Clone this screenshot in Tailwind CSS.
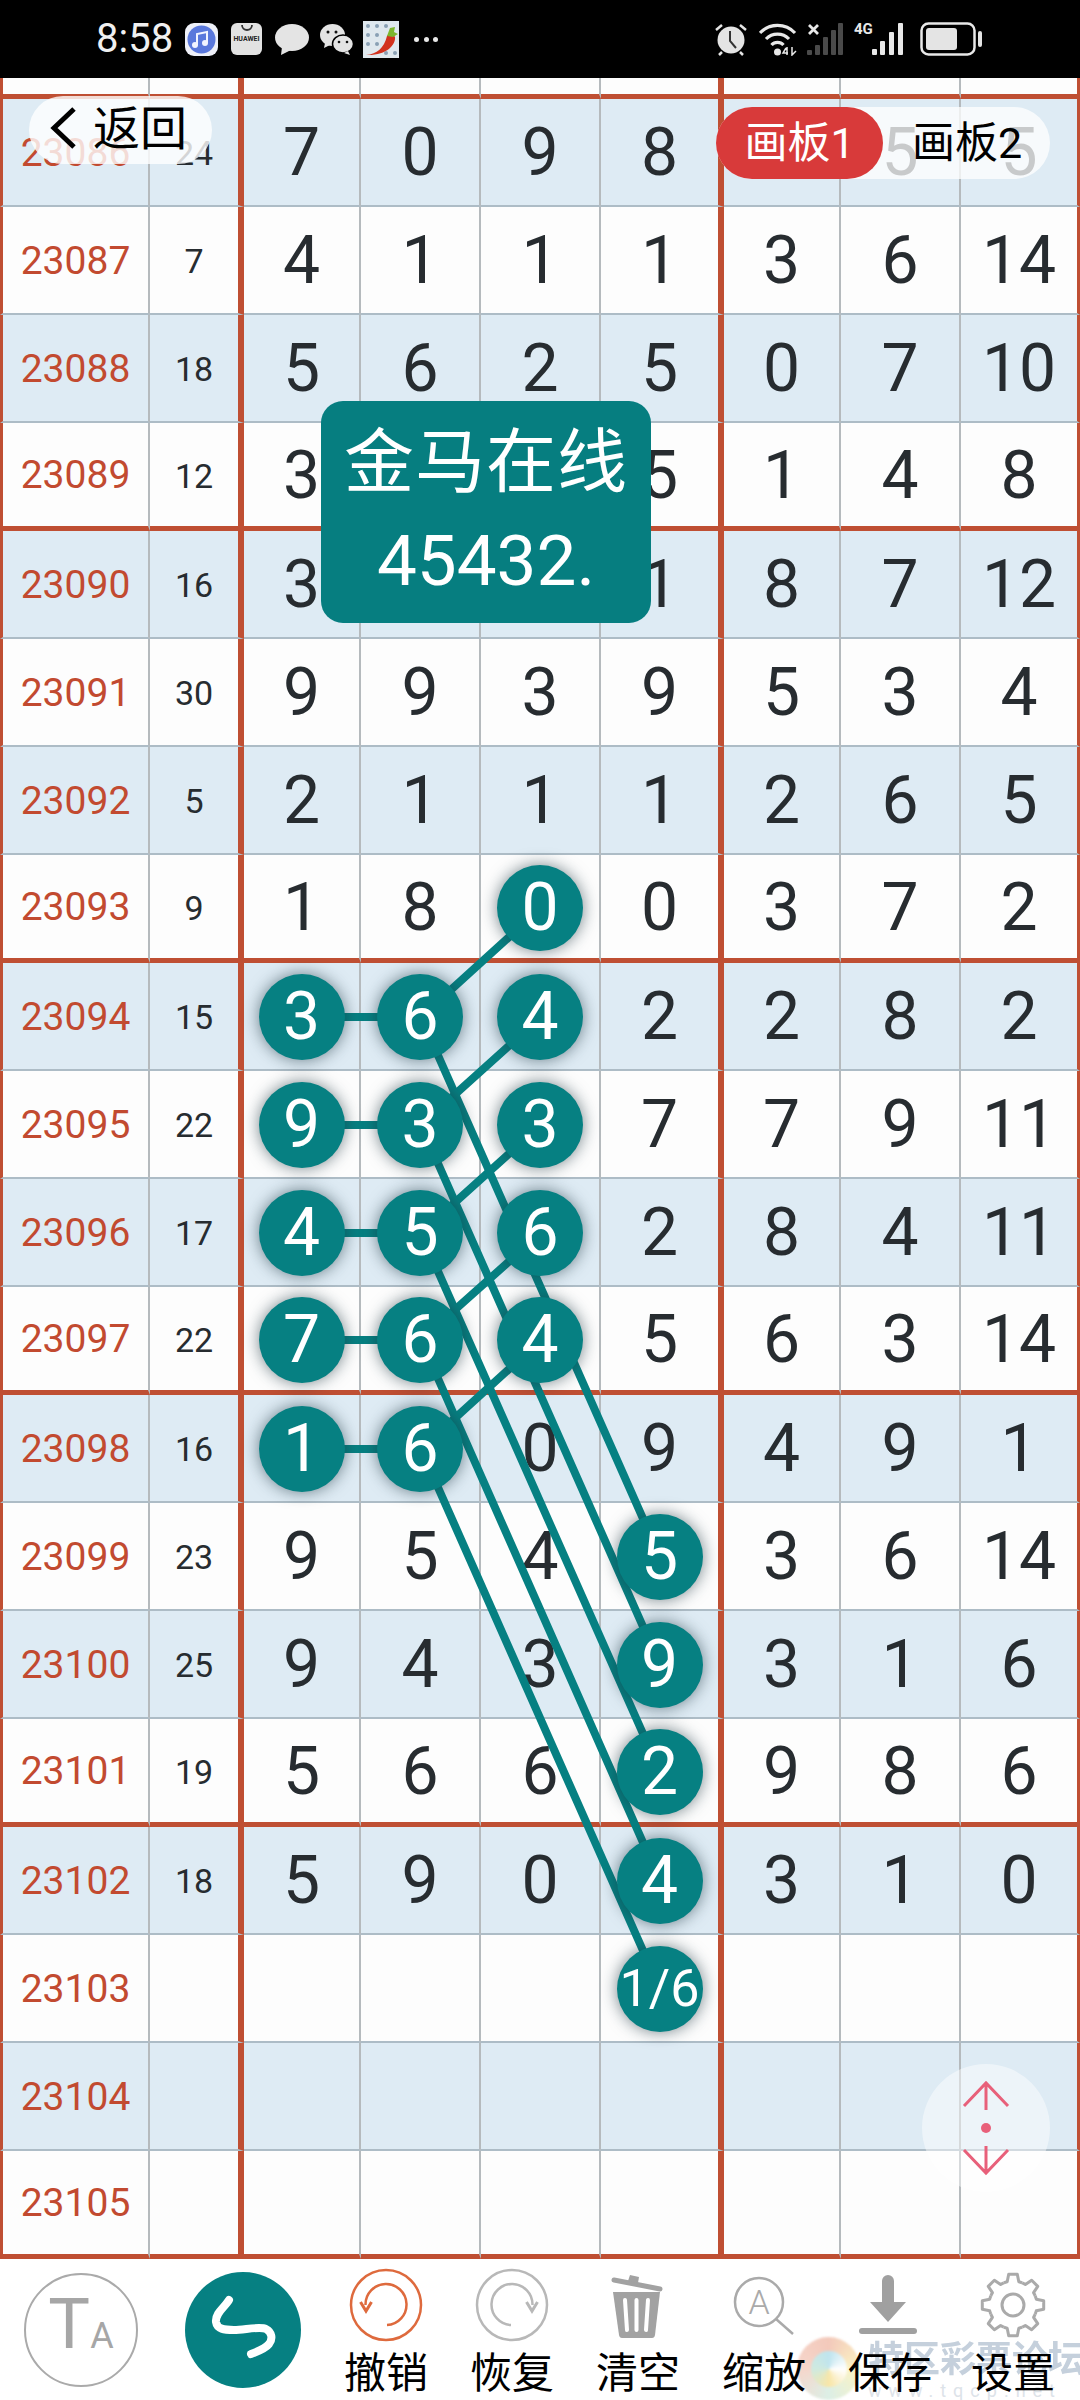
<!DOCTYPE html>
<html lang="zh">
<head>
<meta charset="utf-8">
<script src="https://cdn.jsdelivr.net/npm/@tailwindcss/browser@4"></script>
</head>
<body>
<div class="relative w-[1080px] h-[2400px] overflow-hidden bg-white flex flex-col font-['Roboto','Noto_Sans_CJK_SC',sans-serif]">

<!-- status bar -->
<div class="h-[78px] shrink-0 bg-black flex items-center justify-between pl-[96px] pr-[98px]">
  <div class="flex items-center">
    <span class="text-[40px] leading-none text-[#f0f0f0] w-[77px]">8:58</span>
    <div class="ml-[12px] w-[33px] h-[33px] rounded-[9px] bg-[#eef0f8] flex items-center justify-center">
      <svg width="29" height="29" viewBox="0 0 29 29"><circle cx="14.5" cy="14.5" r="14" fill="#5a78dc"/><path d="M10 20V9l10-2v11" fill="none" stroke="#f2f4ff" stroke-width="2"/><circle cx="8" cy="20" r="3" fill="#f2f4ff"/><circle cx="18" cy="18" r="3" fill="#f2f4ff"/></svg>
    </div>
    <div class="ml-[13px] w-[31px] h-[32px] rounded-[6px] bg-[#e2e2e2] flex flex-col items-center justify-start overflow-hidden">
      <svg width="16" height="11" viewBox="0 0 16 11"><path d="M3 2a5 5 0 0 0 10 0" fill="none" stroke="#333" stroke-width="1.8"/></svg>
      <span class="text-[7px] leading-[9px] mt-[1px] font-bold text-[#222]">HUAWEI</span>
    </div>
    <svg class="ml-[13px]" width="34" height="33" viewBox="0 0 34 33"><ellipse cx="17" cy="14.5" rx="17" ry="13.5" fill="#e4e4e4"/><path d="M7 24L6 32l10-5z" fill="#e4e4e4"/></svg>
    <svg class="ml-[11px]" width="33" height="31" viewBox="0 0 33 31"><ellipse cx="12.500" cy="11" rx="12.500" ry="11" fill="#e4e4e4"/><path d="M5 19l-1 5 6-3z" fill="#e4e4e4"/><circle cx="8" cy="8" r="1.500" fill="#111"/><circle cx="16" cy="8" r="1.500" fill="#111"/><ellipse cx="23" cy="20" rx="10.500" ry="9" fill="#e4e4e4" stroke="#000" stroke-width="1.500"/><path d="M28 27l2 4-6-2z" fill="#e4e4e4"/><circle cx="19" cy="18" r="1.300" fill="#111"/><circle cx="27" cy="18" r="1.300" fill="#111"/></svg>
    <svg class="ml-[10px]" width="36" height="37" viewBox="0 0 36 37"><rect width="36" height="37" fill="#dfe8ee"/><g fill="#8aa0b4"><circle cx="5" cy="5" r="2"/><circle cx="14" cy="5" r="2"/><circle cx="23" cy="5" r="2"/><circle cx="5" cy="14" r="2"/><circle cx="14" cy="14" r="2"/><circle cx="5" cy="23" r="2"/><circle cx="14" cy="23" r="2"/><circle cx="32" cy="32" r="2"/><circle cx="23" cy="32" r="2"/></g><path d="M3 34C14 33 21 27 24 15c2-3 7-2 8 1 1 8-9 19-29 18z" fill="#d2321e"/><path d="M24 15l3-8 5-1-1 5 4 2-5 3z" fill="#7cb62e"/></svg>
    <div class="ml-[15px] w-[24px] flex justify-between">
      <span class="w-[5px] h-[5px] rounded-full bg-[#e8e8e8]"></span><span class="w-[5px] h-[5px] rounded-full bg-[#e8e8e8]"></span><span class="w-[5px] h-[5px] rounded-full bg-[#e8e8e8]"></span>
    </div>
  </div>
  <div class="flex items-center">
    <svg width="34" height="34" viewBox="0 0 34 34"><circle cx="17" cy="18" r="13.500" fill="#e4e4e4"/><path d="M16 9v10l6 7" fill="none" stroke="#333" stroke-width="2"/><path d="M2 8l6-5M32 8l-6-5M5 33l3-3M29 33l-3-3" stroke="#e4e4e4" stroke-width="2.500" fill="none"/></svg>
    <svg class="ml-[11px]" width="38" height="34" viewBox="0 0 38 34"><path d="M1 11a24 24 0 0 1 35 0M7 17a16 16 0 0 1 23 0M12.500 23a8 8 0 0 1 12 0" fill="none" stroke="#e8e8e8" stroke-width="3.200"/><circle cx="18.500" cy="30" r="3.500" fill="#e8e8e8"/><path d="M27 26l-3 5h5M28 25v8M33 25v8l4-4" fill="none" stroke="#e8e8e8" stroke-width="1.500"/></svg>
    <svg class="ml-[10px]" width="36" height="34" viewBox="0 0 36 34"><path d="M2 3l9 9M11 3l-9 9" stroke="#e8e8e8" stroke-width="2.800"/><g fill="#4a4a4a"><rect x="0" y="28" width="5" height="5" rx="1"/><rect x="8" y="23" width="5" height="10" rx="1"/><rect x="16" y="15" width="5" height="18" rx="1"/><rect x="24" y="8" width="5" height="25" rx="1"/><rect x="31" y="1" width="5" height="32" rx="1"/></g></svg>
    <div class="relative ml-[11px] w-[53px] h-[34px]">
      <span class="absolute left-0 top-0 text-[15px] leading-[15px] font-bold text-[#e8e8e8]">4G</span>
      <svg class="absolute left-[18px] top-0" width="35" height="34" viewBox="0 0 35 34"><g fill="#e8e8e8"><rect x="0" y="27" width="5" height="6" rx="1"/><rect x="8" y="19" width="5" height="14" rx="1"/><rect x="17" y="10" width="5" height="23" rx="1"/><rect x="26" y="1" width="5" height="32" rx="1"/></g></svg>
    </div>
    <svg class="ml-[13px]" width="62" height="34" viewBox="0 0 62 34"><rect x="1.500" y="1.500" width="53" height="31" rx="7" fill="none" stroke="#e8e8e8" stroke-width="2.500"/><rect x="6" y="6" width="31" height="22" rx="3" fill="#e4e4e4"/><rect x="58" y="9" width="4" height="16" rx="2" fill="#e4e4e4"/></svg>
  </div>
</div>

<!-- table -->
<div class="shrink-0 text-[#272c30] text-[66px] leading-none
  [&>div]:grid [&>div]:grid-cols-[150px_94px_117px_120px_120px_123px_117px_120px_119px] [&>div]:h-[108px] [&>div:first-child]:h-[21px]
  [&>div:nth-child(even)]:bg-[#deebf4] [&>div:nth-child(odd)]:bg-[#fdfdfd]
  [&>div>div]:flex [&>div>div]:items-center [&>div>div]:justify-center [&>div>div]:pt-[2px] [&>div>div]:border-r-2 [&>div>div]:border-b-2 [&>div>div]:border-r-[#b5babd] [&>div>div]:border-b-[#adbcc6]
  [&>div:nth-child(4n+1)>div]:border-b-[5px] [&>div:nth-child(4n+1)>div]:border-b-[#bf4f33]
  [&>div>div:nth-child(1)]:text-[39px] [&>div>div:nth-child(1)]:text-[#c24a30] [&>div>div:nth-child(1)]:border-l-[3px] [&>div>div:nth-child(1)]:border-l-[#bf4f33]
  [&>div>div:nth-child(2)]:text-[34px] [&>div>div:nth-child(2)]:border-r-[6px] [&>div>div:nth-child(2)]:border-r-[#bf4f33]
  [&>div>div:nth-child(6)]:border-r-[6px] [&>div>div:nth-child(6)]:border-r-[#bf4f33]
  [&>div>div:nth-child(9)]:border-r-[3px] [&>div>div:nth-child(9)]:border-r-[#bf4f33]
  [&_b]:relative [&_b]:z-20 [&_b]:flex [&_b]:items-center [&_b]:justify-center [&_b]:w-[86px] [&_b]:h-[86px] [&_b]:rounded-full [&_b]:bg-[#068082] [&_b]:text-white [&_b]:font-normal [&_b]:shadow-[0_0_16px_rgba(25,50,60,0.6)]">
  <div><div></div><div></div><div></div><div></div><div></div><div></div><div></div><div></div><div></div></div>
  <div><div>23086</div><div>24</div><div>7</div><div>0</div><div>9</div><div>8</div><div>2</div><div>5</div><div>5</div></div>
  <div><div>23087</div><div>7</div><div>4</div><div>1</div><div>1</div><div>1</div><div>3</div><div>6</div><div>14</div></div>
  <div><div>23088</div><div>18</div><div>5</div><div>6</div><div>2</div><div>5</div><div>0</div><div>7</div><div>10</div></div>
  <div><div>23089</div><div>12</div><div>3</div><div>6</div><div>2</div><div>5</div><div>1</div><div>4</div><div>8</div></div>
  <div><div>23090</div><div>16</div><div>3</div><div>0</div><div>1</div><div>1</div><div>8</div><div>7</div><div>12</div></div>
  <div><div>23091</div><div>30</div><div>9</div><div>9</div><div>3</div><div>9</div><div>5</div><div>3</div><div>4</div></div>
  <div><div>23092</div><div>5</div><div>2</div><div>1</div><div>1</div><div>1</div><div>2</div><div>6</div><div>5</div></div>
  <div><div>23093</div><div>9</div><div>1</div><div>8</div><div><b>0</b></div><div>0</div><div>3</div><div>7</div><div>2</div></div>
  <div><div>23094</div><div>15</div><div><b>3</b></div><div><b>6</b></div><div><b>4</b></div><div>2</div><div>2</div><div>8</div><div>2</div></div>
  <div><div>23095</div><div>22</div><div><b>9</b></div><div><b>3</b></div><div><b>3</b></div><div>7</div><div>7</div><div>9</div><div>11</div></div>
  <div><div>23096</div><div>17</div><div><b>4</b></div><div><b>5</b></div><div><b>6</b></div><div>2</div><div>8</div><div>4</div><div>11</div></div>
  <div><div>23097</div><div>22</div><div><b>7</b></div><div><b>6</b></div><div><b>4</b></div><div>5</div><div>6</div><div>3</div><div>14</div></div>
  <div><div>23098</div><div>16</div><div><b>1</b></div><div><b>6</b></div><div>0</div><div>9</div><div>4</div><div>9</div><div>1</div></div>
  <div><div>23099</div><div>23</div><div>9</div><div>5</div><div>4</div><div><b>5</b></div><div>3</div><div>6</div><div>14</div></div>
  <div><div>23100</div><div>25</div><div>9</div><div>4</div><div>3</div><div><b>9</b></div><div>3</div><div>1</div><div>6</div></div>
  <div><div>23101</div><div>19</div><div>5</div><div>6</div><div>6</div><div><b>2</b></div><div>9</div><div>8</div><div>6</div></div>
  <div><div>23102</div><div>18</div><div>5</div><div>9</div><div>0</div><div><b>4</b></div><div>3</div><div>1</div><div>0</div></div>
  <div><div>23103</div><div></div><div></div><div></div><div></div><div><b class="text-[52px]">1/6</b></div><div></div><div></div><div></div></div>
  <div><div>23104</div><div></div><div></div><div></div><div></div><div></div><div></div><div></div><div></div></div>
  <div><div>23105</div><div></div><div></div><div></div><div></div><div></div><div></div><div></div><div></div></div>
</div>

<!-- connecting lines -->
<svg class="absolute left-0 top-0 z-10 pointer-events-none" width="1080" height="2400" viewBox="0 0 1080 2400" fill="none" stroke="#068082" stroke-width="8">
  <path d="M541 908L421 1017M301 1017H421M541 1017L421 1125M301 1125H421M541 1125L421 1233M301 1233H421M541 1233L421 1340M301 1340H421M541 1340L421 1449M301 1449H421"/>
  <path d="M421 1017L660 1557M421 1125L660 1665M421 1233L660 1772M421 1340L660 1881M421 1449L660 1989"/>
</svg>

<!-- back button -->
<div class="absolute z-30 left-[29px] top-[96px] w-[183px] h-[68px] rounded-full bg-white/80 flex items-center pl-[20px] pb-[4px] text-black">
  <svg width="28" height="44" viewBox="0 0 28 44" fill="none" stroke="#000" stroke-width="5"><path d="M25 3L5 22l20 19"/></svg>
  <span class="ml-[16px] text-[47px] leading-none">返回</span>
</div>

<!-- board switch -->
<div class="absolute z-30 left-[716px] top-[107px] w-[334px] h-[72px] rounded-full bg-white/75 flex items-center text-[43px] leading-none text-black">
  <span class="w-[167px] h-[72px] rounded-full bg-[#d83a3a] text-white flex items-center justify-center">画板1</span>
  <span class="ml-[29px]">画板2</span>
</div>

<!-- note -->
<div class="absolute z-30 left-[321px] top-[401px] w-[330px] h-[222px] rounded-[22px] bg-[#067e80] text-white flex flex-col items-center justify-center">
  <span class="text-[70px] leading-[98px] tracking-[1px]">金马在线</span>
  <span class="text-[71px] leading-[98px]">45432.</span>
</div>

<!-- scroll control -->
<div class="absolute z-30 left-[922px] top-[2064px] w-[128px] h-[128px] rounded-full bg-white/45 flex items-center justify-center">
  <svg width="60" height="96" viewBox="0 0 60 96" fill="none" stroke="#e8607a" stroke-width="3"><path d="M8 26L30 3l22 23M30 3v27M8 70l22 23 22-23M30 93V66"/><circle cx="30" cy="48" r="5" fill="#e8607a" stroke="none"/></svg>
</div>

<!-- watermark -->
<div class="absolute z-0 left-[797px] top-[2337px] w-[63px] h-[63px] rounded-full blur-[1px] bg-[conic-gradient(#f3c9bb,#fbf3c4,#dcefe6,#f6d6cb,#f3c9bb)] flex items-center justify-center">
  <div class="w-[36px] h-[36px] rounded-full bg-[conic-gradient(#bfe4ee,#ffffff,#f8e6a8,#cfeae0,#bfe4ee)]"></div>
</div>
<div class="absolute z-0 left-[868px] top-[2340px] w-[212px] whitespace-nowrap text-[36px] leading-[40px] font-bold text-[#c5d0dc] blur-[0.6px]">特区彩票论坛</div>
<div class="absolute z-0 left-[868px] top-[2381px] w-[212px] whitespace-nowrap text-[18px] leading-[19px] tracking-[7px] text-[#dde3e9]">www.tqcp.net</div>

<!-- toolbar -->
<div class="relative z-10 h-[141px] flex items-start text-black text-[42px] [&_span]:leading-[48px]">
  <div class="ml-[24px] mt-[14px] w-[114px] h-[114px] rounded-full border-2 border-[#aaaaaa] flex items-center justify-center text-[#a6a6a6]">
    <div class="flex items-baseline"><span class="text-[70px]">T</span><span class="text-[36px]">A</span></div>
  </div>
  <div class="ml-[47px] mt-[13px] w-[116px] h-[116px] rounded-full bg-[#068082] flex items-center justify-center">
    <svg width="80" height="74" viewBox="0 0 80 74" fill="none" stroke="#fff" stroke-width="8" stroke-linecap="round" stroke-linejoin="round"><path d="M26 7C22 14 12 20 13 29c1 7 8 8 18 8 10 0 26-4 32-1 6 3 7 10 3 15-3 4-10 7-18 10"/></svg>
  </div>
  <div class="ml-[22px] w-[126px] pt-[6px] flex flex-col items-center">
    <svg width="80" height="80" viewBox="0 0 80 80" fill="none" stroke="#de6a3d" stroke-width="2.500"><circle cx="40" cy="40" r="35"/><path d="M41 60A20.500 20.500 0 1 0 19.500 40"/><path d="M14.500 37L20 46l5.500-9" stroke-width="3"/></svg>
    <span class="mt-[5px]">撤销</span>
  </div>
  <div class="w-[126px] pt-[6px] flex flex-col items-center">
    <svg width="80" height="80" viewBox="0 0 80 80" fill="none" stroke="#b8b8b8" stroke-width="2.500"><circle cx="40" cy="40" r="35"/><path d="M39 60A20.500 20.500 0 1 1 60.500 40"/><path d="M54.500 37L60 46l5.500-9" stroke-width="3"/></svg>
    <span class="mt-[5px]">恢复</span>
  </div>
  <div class="w-[126px] pt-[6px] flex flex-col items-center">
    <svg width="80" height="80" viewBox="0 0 80 80"><path d="M16 15l46 9" stroke="#a2a2a2" stroke-width="5" stroke-linecap="round"/><path d="M30 16l2-6 9 2-1 6z" fill="#a2a2a2"/><path d="M15 27H62L57 70q-.500 3-3 3H24q-2.500 0-3-3z" fill="#a2a2a2"/><path d="M27 35l2 30M38.500 35v30M50 35l-2 30" stroke="#fff" stroke-width="4" stroke-linecap="round"/></svg>
    <span class="mt-[5px]">清空</span>
  </div>
  <div class="w-[126px] pt-[6px] flex flex-col items-center">
    <svg width="80" height="80" viewBox="0 0 80 80" fill="none" stroke="#aaaaaa" stroke-width="2.500"><circle cx="35" cy="37" r="24"/><path d="M52 54l17 15"/><text x="35" y="49" text-anchor="middle" font-size="34" font-family="Roboto" font-weight="300" fill="#aaaaaa" stroke="none">A</text></svg>
    <span class="mt-[5px]">缩放</span>
  </div>
  <div class="w-[126px] pt-[6px] flex flex-col items-center">
    <svg width="80" height="80" viewBox="0 0 80 80" fill="#a0a0a0"><path d="M32 16a6 6 0 0 1 12 0V37H56L38 57 20 37H32z"/><rect x="9" y="63" width="58" height="6" rx="3"/></svg>
    <span class="mt-[5px]">保存</span>
  </div>
  <div class="w-[120px] pt-[6px] flex flex-col items-center">
    <svg width="80" height="80" viewBox="0 0 80 80" fill="none" stroke="#aaaaaa" stroke-width="3" stroke-linejoin="round"><g id="gear-tooth"><path d="M30.820 17.830A24 24 0 0 1 34.200 16.710L35.690 9.300H44.310L45.800 16.710A24 24 0 0 1 49.180 17.830"/></g><use href="#gear-tooth" transform="rotate(45 40 40)"/><use href="#gear-tooth" transform="rotate(90 40 40)"/><use href="#gear-tooth" transform="rotate(135 40 40)"/><use href="#gear-tooth" transform="rotate(180 40 40)"/><use href="#gear-tooth" transform="rotate(225 40 40)"/><use href="#gear-tooth" transform="rotate(270 40 40)"/><use href="#gear-tooth" transform="rotate(315 40 40)"/><circle cx="40" cy="40" r="11"/></svg>
    <span class="mt-[5px]">设置</span>
  </div>
</div>
</div>
</body>
</html>
